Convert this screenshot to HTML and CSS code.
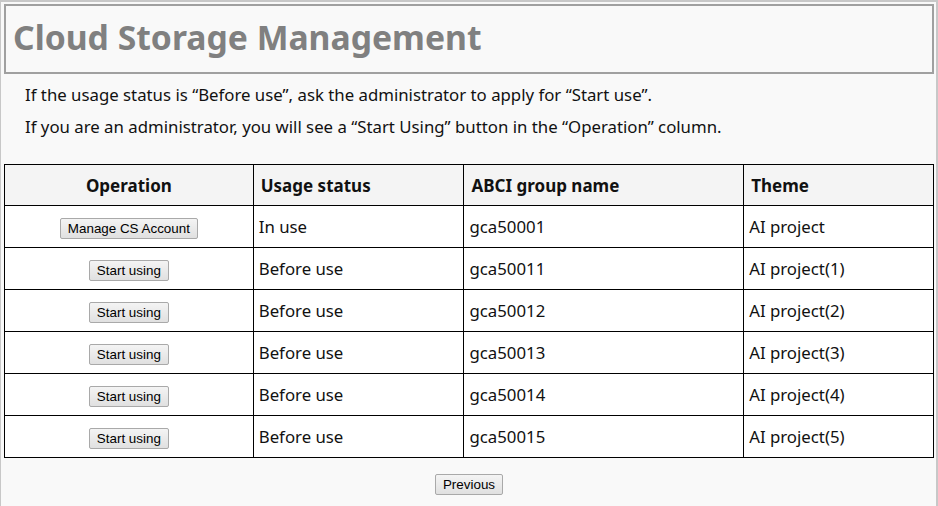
FILE: index.html
```html
<!DOCTYPE html>
<html>
<head>
<meta charset="utf-8">
<link rel="stylesheet" href="styles.css">
</head>
<body>
<div class="page">
  <div class="title-box"><h1 class="title">Cloud Storage Management</h1></div>
  <div class="notes">
    <p class="note">If the usage status is “Before use”, ask the administrator to apply for “Start use”.</p>
    <p class="note">If you are an administrator, you will see a “Start Using” button in the “Operation” column.</p>
  </div>
  <table class="grid">
    <colgroup>
      <col class="c1"><col class="c2"><col class="c3"><col class="c4">
    </colgroup>
    <thead>
      <tr><th class="center">Operation</th><th>Usage status</th><th>ABCI group name</th><th>Theme</th></tr>
    </thead>
    <tbody>
      <tr><td class="center"><button class="btn">Manage CS Account</button></td><td>In use</td><td>gca50001</td><td>AI project</td></tr>
      <tr><td class="center"><button class="btn">Start using</button></td><td>Before use</td><td>gca50011</td><td>AI project(1)</td></tr>
      <tr><td class="center"><button class="btn">Start using</button></td><td>Before use</td><td>gca50012</td><td>AI project(2)</td></tr>
      <tr><td class="center"><button class="btn">Start using</button></td><td>Before use</td><td>gca50013</td><td>AI project(3)</td></tr>
      <tr><td class="center"><button class="btn">Start using</button></td><td>Before use</td><td>gca50014</td><td>AI project(4)</td></tr>
      <tr><td class="center"><button class="btn">Start using</button></td><td>Before use</td><td>gca50015</td><td>AI project(5)</td></tr>
    </tbody>
  </table>
  <div class="footer"><button class="btn">Previous</button></div>
</div>
</body>
</html>
```
FILE: styles.css
```css
html, body {
  margin: 0;
  padding: 0;
  background: #f9f9f9;
}
body {
  font-family: "Noto Sans", "DejaVu Sans", sans-serif;
  color: #111;
}
.page {
  width: 938px;
  height: 506px;
  box-sizing: border-box;
  border-top: 2px solid #c8c8c8;
  border-left: 1px solid #c8c8c8;
  border-right: 2px solid #c8c8c8;
  padding: 2px 2px 0 3px;
  background: #f9f9f9;
}
.title-box {
  border: 2px solid #a0a0a0;
  height: 70px;
  box-sizing: border-box;
  display: flex;
  align-items: center;
  padding: 0 0 4px 7px;
}
.title {
  margin: 0;
  font-family: "Noto Sans", sans-serif;
  font-weight: bold;
  font-size: 33.7px;
  color: #808080;
}
.notes {
  padding: 10px 0 0 21px;
}
.note {
  margin: 0 0 10px 0;
  font-size: 16.8px;
  line-height: 22px;
}
.grid {
  margin-top: 26px;
  width: 930px;
  border-collapse: collapse;
  background: #fff;
  font-size: 16.8px;
}
.c1 { width: 249px; }
.c2 { width: 211px; }
.c3 { width: 280px; }
.c4 { width: 190px; }
.grid th, .grid td {
  border: 1px solid #000;
  text-align: left;
  padding: 0 0 0 5px;
  height: 41px;
  box-sizing: border-box;
}
.grid th {
  background: #f4f4f4;
  font-weight: bold;
  font-size: 17px;
  padding-left: 7px;
}
.grid td { height: 42px; }
.grid .center { text-align: center; padding-left: 0; }
.btn {
  font-family: "Liberation Sans", Arial, sans-serif;
  font-size: 13.4px;
  color: #000;
  padding: 1px 7px;
  height: 21px;
  border: 1px solid #a9a9a9;
  border-radius: 2px;
  background: linear-gradient(#f4f4f4, #e0e0e0);
}
.footer {
  display: flex;
  justify-content: center;
  padding-top: 16px;
}
```
